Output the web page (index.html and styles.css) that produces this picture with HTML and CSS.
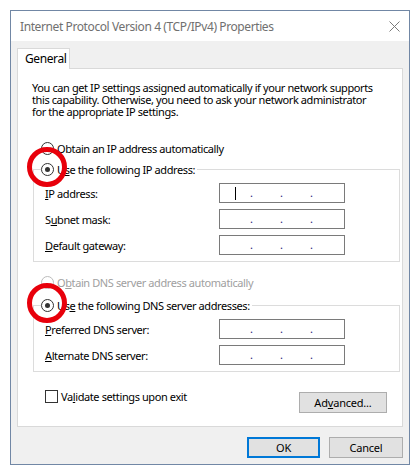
FILE: index.html
```html
<!doctype html>
<html>
<head>
    <meta charset="UTF-8">
    <title>Internet Protocol Version 4 (TCP/IPv4) Properties</title>
    <link rel="stylesheet" href="styles.css">
</head>
<body>
    <div class="window">
        <div class="titlebar">
            <span class="title">Internet Protocol Version 4 (TCP/IPv4) Properties</span>
            <svg class="close" width="11" height="11" viewBox="0 0 11 11">
                <path d="M0.5 0.5 L10.5 10.5 M10.5 0.5 L0.5 10.5" stroke="#7a7a7a" stroke-width="1" fill="none"/>
            </svg>
        </div>
        <div class="dialog">
            <div class="tabs">
                <div class="tab">General</div>
            </div>
            <div class="panel">
                <p class="description">You can get IP settings assigned automatically if your network supports<br>this capability. Otherwise, you need to ask your network administrator<br>for the appropriate IP settings.</p>

                <div class="radio first"><span class="dot"></span><span>Obtain an IP address automatically</span></div>
                <fieldset class="group">
                    <legend class="radio"><span class="dot checked"><span class="mark"></span></span><span>U<u>s</u>e the following IP address:</span></legend>
                    <div class="row"><span class="label"><u>I</u>P address:</span><div class="ipbox"><span class="octet"><span class="caret"></span></span><span class="sep">.</span><span class="octet"></span><span class="sep">.</span><span class="octet"></span><span class="sep">.</span></div></div>
                    <div class="row"><span class="label">S<u>u</u>bnet mask:</span><div class="ipbox"><span class="octet"></span><span class="sep">.</span><span class="octet"></span><span class="sep">.</span><span class="octet"></span><span class="sep">.</span></div></div>
                    <div class="row"><span class="label"><u>D</u>efault gateway:</span><div class="ipbox"><span class="octet"></span><span class="sep">.</span><span class="octet"></span><span class="sep">.</span><span class="octet"></span><span class="sep">.</span></div></div>
                </fieldset>

                <div class="radio second disabled"><span class="dot"></span><span>O<u>b</u>tain DNS server address automatically</span></div>
                <fieldset class="group dns">
                    <legend class="radio"><span class="dot checked"><span class="mark"></span></span><span>Us<u>e</u> the following DNS server addresses:</span></legend>
                    <div class="row"><span class="label"><u>P</u>referred DNS server:</span><div class="ipbox"><span class="octet"></span><span class="sep">.</span><span class="octet"></span><span class="sep">.</span><span class="octet"></span><span class="sep">.</span></div></div>
                    <div class="row"><span class="label"><u>A</u>lternate DNS server:</span><div class="ipbox"><span class="octet"></span><span class="sep">.</span><span class="octet"></span><span class="sep">.</span><span class="octet"></span><span class="sep">.</span></div></div>
                </fieldset>

                <div class="footer">
                    <div class="check"><span class="box"></span><span>Va<u>l</u>idate settings upon exit</span></div>
                    <button class="btn advanced">Ad<u>v</u>anced...</button>
                </div>
            </div>
            <div class="buttons">
                <button class="btn ok">OK</button>
                <button class="btn cancel">Cancel</button>
            </div>
        </div>
    </div>
</body>
</html>
```

FILE: styles.css
```css
body {
    margin: 0;
    background-color: #fff;
    font-family: "Noto Sans", "Liberation Sans", sans-serif;
    font-size: 11px;
    letter-spacing: -0.4px;
    color: #000;
}
u {
    text-decoration-thickness: 1px;
    text-underline-offset: 1px;
}
.window {
    margin: 10px;
    width: 398px;
    height: 453px;
    border: 1px solid #7187a5;
    display: flex;
    flex-direction: column;
}
.titlebar {
    height: 30px;
    background-color: #fff;
    display: flex;
    align-items: center;
    justify-content: space-between;
    padding: 0 9px;
}
.title {
    color: #707070;
    font-size: 12px;
}
.close {
    display: block;
}
.dialog {
    flex: 1;
    background-color: #f0f0f0;
    padding: 7px 6px 0 6px;
}
.tabs {
    display: flex;
}
.tab {
    position: relative;
    width: 53px;
    height: 21px;
    line-height: 20px;
    margin-bottom: -1px;
    border: 1px solid #d9d9d9;
    border-bottom: none;
    background-color: #fff;
    padding-left: 7px;
    box-sizing: border-box;
    font-size: 12px;
}
.panel {
    height: 357px;
    border: 1px solid #d9d9d9;
    background-color: #fff;
    padding: 0 12px 0 14px;
}
.description {
    margin: 13px 0 0 0;
    line-height: 12px;
    white-space: nowrap;
}
.radio {
    display: flex;
    align-items: center;
    height: 13px;
    line-height: 13px;
    white-space: nowrap;
}
.radio.first {
    margin: 24px 0 0 9px;
}
.radio.second {
    margin: 14px 0 0 9px;
}
.radio.disabled {
    color: #a0a0a0;
}
.dot {
    position: relative;
    width: 11px;
    height: 11px;
    border: 1px solid #333;
    border-radius: 50%;
    margin-right: 3px;
    flex: none;
    background-color: #fff;
}
.disabled .dot {
    border-color: #bcbcbc;
}
.dot.checked::before {
    content: "";
    position: absolute;
    left: 3px;
    top: 3px;
    width: 5px;
    height: 5px;
    border-radius: 50%;
    background-color: #333;
}
.mark {
    position: absolute;
    left: -15px;
    top: -17px;
    width: 30px;
    height: 30px;
    border: 5px solid #e8000b;
    border-radius: 50%;
}
.group {
    width: 354px;
    margin: 8px 0 0 1px;
    padding: 7px 0 6px 11px;
    border: 1px solid #dcdcdc;
    box-sizing: content-box;
    display: flex;
    flex-direction: column;
    gap: 6px;
}
.group.dns {
    margin-top: 10px;
}
.group legend {
    margin-left: -4px;
    padding: 0 2px 0 0;
}
.row {
    display: flex;
    align-items: center;
    height: 20px;
}
.label {
    width: 174px;
}
.ipbox {
    width: 124px;
    height: 18px;
    border: 1px solid #7a7a7a;
    display: flex;
    align-items: center;
}
.octet {
    width: 27px;
    height: 18px;
    display: flex;
    align-items: center;
    justify-content: center;
}
.octet:first-child {
    width: 30px;
}
.caret {
    width: 1px;
    height: 13px;
    background-color: #000;
}
.sep {
    width: 3px;
    color: #1c1c7a;
    line-height: 18px;
    text-align: center;
    letter-spacing: 0;
}
.footer {
    display: flex;
    justify-content: space-between;
    align-items: flex-start;
    margin: 18px 0 0 13px;
    width: 342px;
}
.check {
    display: flex;
    align-items: center;
    height: 13px;
}
.box {
    width: 11px;
    height: 11px;
    border: 1px solid #333;
    margin-right: 3px;
    flex: none;
}
.btn {
    font-family: "Noto Sans", "Liberation Sans", sans-serif;
    font-size: 11px;
    letter-spacing: -0.2px;
    background-color: #e1e1e1;
    border: 1px solid #adadad;
    color: #000;
    padding: 0;
    height: 21px;
}
.advanced {
    width: 88px;
    margin-top: 2px;
}
.buttons {
    display: flex;
    justify-content: flex-end;
    gap: 9px;
    margin-top: 10px;
}
.ok {
    width: 73px;
    border: 2px solid #0078d7;
}
.cancel {
    width: 74px;
}
```
